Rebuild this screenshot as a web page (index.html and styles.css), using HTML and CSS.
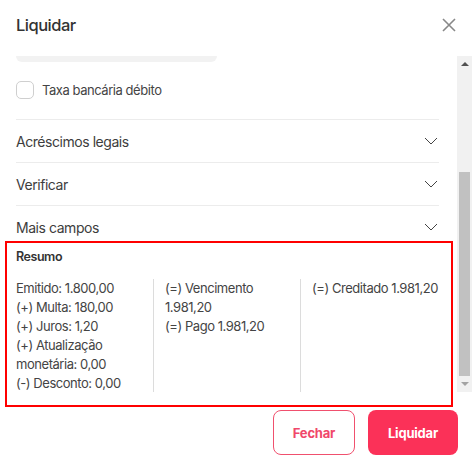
FILE: index.html
```html
<!DOCTYPE html>
<html lang="pt-BR">
<head>
  <meta charset="UTF-8" />
  <meta name="viewport" content="width=device-width, initial-scale=1.0"/>
  <title>Liquidar</title>
  <link rel="stylesheet" href="styles.css">
</head>
<body>

<div class="modal">
  <header class="modal-header">
    <h1 class="modal-title">Liquidar</h1>
    <button class="close" aria-label="Fechar">
      <svg width="14" height="14" viewBox="0 0 14 14"><path d="M1 1L13 13M13 1L1 13" stroke="#888" stroke-width="1.6" fill="none"/></svg>
    </button>
  </header>

  <div class="modal-body">
    <div class="scroll-content">
      <div class="input-tail"></div>

      <label class="check-row">
        <span class="checkbox"></span>
        <span>Taxa bancária débito</span>
      </label>

      <div class="accordion">
        <div class="acc-row">
          <span>Acréscimos legais</span>
          <svg class="chev" width="14" height="8" viewBox="0 0 14 8"><path d="M1 1L7 7L13 1" stroke="#444" stroke-width="1" fill="none"/></svg>
        </div>
        <div class="acc-row">
          <span>Verificar</span>
          <svg class="chev" width="14" height="8" viewBox="0 0 14 8"><path d="M1 1L7 7L13 1" stroke="#444" stroke-width="1" fill="none"/></svg>
        </div>
        <div class="acc-row">
          <span>Mais campos</span>
          <svg class="chev" width="14" height="8" viewBox="0 0 14 8"><path d="M1 1L7 7L13 1" stroke="#444" stroke-width="1" fill="none"/></svg>
        </div>
      </div>

      <section class="resumo">
        <h2 class="resumo-title">Resumo</h2>
        <div class="resumo-cols">
          <div class="col">
            <p>Emitido: 1.800,00</p>
            <p>(+) Multa: 180,00</p>
            <p>(+) Juros: 1,20</p>
            <p>(+) Atualização monetária: 0,00</p>
            <p>(-) Desconto: 0,00</p>
          </div>
          <div class="col">
            <p>(=) Vencimento 1.981,20</p>
            <p>(=) Pago 1.981,20</p>
          </div>
          <div class="col">
            <p>(=) Creditado 1.981,20</p>
          </div>
        </div>
      </section>
    </div>

    <div class="scrollbar">
      <span class="arrow up"></span>
      <div class="track"><div class="thumb"></div></div>
      <span class="arrow down"></span>
    </div>
  </div>

  <footer class="modal-footer">
    <button class="btn btn-outline">Fechar</button>
    <button class="btn btn-primary">Liquidar</button>
  </footer>

  <!-- highlight around the summary -->
  <div class="highlight"></div>
</div>

</body>
</html>
```

FILE: styles.css
```css
body {
  margin: 0;
  background: #fff;
  font-family: Inter, 'Noto Sans', sans-serif;
  color: #444;
  letter-spacing: -0.45px;
}

.modal {
  position: relative;
  width: 472px;
  height: 470px;
  display: flex;
  flex-direction: column;
  overflow: hidden;
}

.modal-header {
  height: 56px;
  display: flex;
  align-items: center;
  justify-content: space-between;
  padding: 0 16px 6px;
  box-sizing: border-box;
}

.modal-title {
  margin: 0;
  font-size: 16.5px;
  font-weight: 500;
  letter-spacing: -0.5px;
  color: #333;
}

.close {
  background: none;
  border: none;
  padding: 0;
  width: 14px;
  height: 14px;
  display: flex;
}

.modal-body {
  height: 336px;
  display: flex;
}

.scroll-content {
  flex: 1;
  padding: 0 18px 0 16px;
  overflow: hidden;
}

.input-tail {
  width: 201px;
  height: 6px;
  background: #f2f2f2;
  border-radius: 0 0 8px 8px;
}

.check-row {
  display: flex;
  align-items: center;
  gap: 8px;
  margin-top: 19px;
  font-size: 13px;
  color: #444;
}

.checkbox {
  width: 16px;
  height: 16px;
  border: 1px solid #cfcfcf;
  border-radius: 5px;
}

.accordion {
  margin-top: 20px;
}

.acc-row {
  height: 43px;
  border-top: 1px solid #ececec;
  display: flex;
  align-items: center;
  justify-content: space-between;
  padding-right: 1px;
  font-size: 14px;
  color: #3d3d3d;
  box-sizing: border-box;
}

.resumo-title {
  margin: 0;
  font-size: 12.5px;
  font-weight: 600;
  line-height: 18px;
  color: #333;
}

.resumo-cols {
  display: grid;
  grid-template-columns: 137px 147px 1fr;
  margin-top: 13px;
  font-size: 13px;
  line-height: 19px;
  color: #444;
}

.col p {
  margin: 0;
}

.col + .col {
  border-left: 1px solid #dcdcdc;
  padding-left: 11px;
}

.scrollbar {
  width: 15px;
  background: #f1f1f1;
  display: flex;
  flex-direction: column;
  align-items: center;
}

.arrow {
  width: 0;
  height: 0;
  border-left: 4px solid transparent;
  border-right: 4px solid transparent;
  margin: 6px 0;
}

.arrow.up {
  border-bottom: 4px solid #505050;
}

.arrow.down {
  border-top: 4px solid #a3a3a3;
}

.track {
  flex: 1;
  width: 100%;
  display: flex;
  flex-direction: column;
  justify-content: flex-end;
}

.thumb {
  height: 204px;
  margin: 0 2px;
  background: #c1c1c1;
}

.modal-footer {
  display: flex;
  justify-content: flex-end;
  gap: 13px;
  padding: 18px 14px 0 0;
}

.btn {
  height: 45px;
  border-radius: 8px;
  font-family: Inter, sans-serif;
  font-size: 13px;
  font-weight: 700;
  letter-spacing: -0.2px;
  cursor: pointer;
}

.btn-outline {
  width: 82px;
  background: #fff;
  border: 1px solid #f0506e;
  color: #f0476a;
}

.btn-primary {
  width: 90px;
  background: #fb3158;
  border: none;
  color: #fff;
}

.highlight {
  position: absolute;
  left: 5px;
  top: 241px;
  width: 444px;
  height: 162px;
  border: 2px solid #ff0000;
  pointer-events: none;
}
```
